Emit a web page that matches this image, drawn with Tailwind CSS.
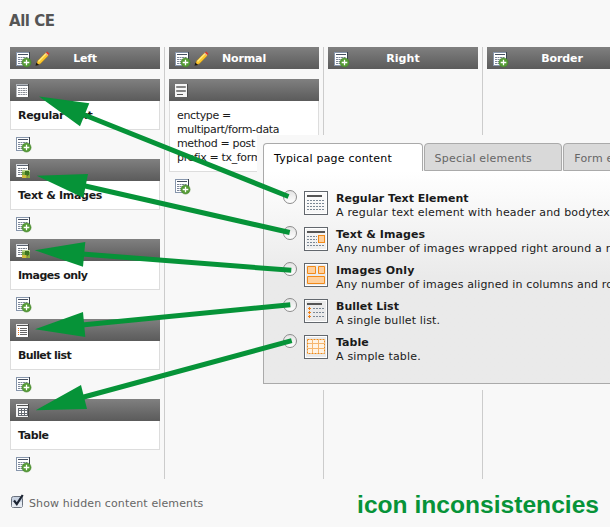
<!DOCTYPE html>
<html lang="en">
<head>
<meta charset="utf-8">
<title>All CE</title>
<script src="https://cdn.jsdelivr.net/npm/@tailwindcss/browser@4"></script>
</head>
<body class="relative w-[610px] h-[527px] overflow-hidden bg-[#f8f8f8] font-['DejaVu_Sans',Verdana,sans-serif] text-[11px] leading-[14px] text-[#1a1a1a]">
<svg class="hidden">
  <defs>
    <linearGradient id="paper" x1="0" y1="0" x2="1" y2="1"><stop offset="0" stop-color="#fff"/><stop offset="1" stop-color="#e9ebed"/></linearGradient>
    <symbol id="doc" viewBox="0 0 16 16">
      <rect x="0" y="0" width="13" height="13" fill="#b4b8bd"/><rect x="12" y="0" width="1" height="13" fill="#4a4a4a"/><rect x="1" y="1" width="11" height="12" fill="#fff"/>
      <path d="M1 1.500h11" stroke="#707680"/>
      <path d="M2 4.500h9M2 6.500h9M2 8.500h9M2 10.500h9" stroke="#8b8f96" stroke-dasharray="2 .5"/>
    </symbol>
    <symbol id="add" viewBox="0 0 16 16">
      <rect x="0" y="0" width="14" height="14" fill="#8796ac"/><rect x="13" y="0" width="1" height="7" fill="#39424e"/><rect x="1" y="1" width="12" height="12" fill="#fff"/>
      <path d="M2 2.500h10" stroke="#465061"/><path d="M2 5.500h10M2 7.500h10M2 9.500h7M2 11.500h5" stroke="#7c879a" stroke-dasharray="2 .5"/>
      <circle cx="10.500" cy="10.500" r="4.600" fill="#559b35" stroke="#427f2a" stroke-width=".5"/><path d="M10.500 7.700v5.600M7.700 10.500h5.600" stroke="#fff" stroke-width="1.300"/>
    </symbol>
    <symbol id="pencil" viewBox="0 0 16 16">
      <path d="M1.200 14.200l1.300-4.200L10.400 1.900l2.900 2.900-7.900 8z" fill="#fbc62b" stroke="#b47c12" stroke-width=".5"/>
      <path d="M3.500 10.500l7.300-7.500" stroke="#ffec80" stroke-width="1.300"/><path d="M10.900 1.500l1.200-1.100 2.400 2.400-1.200 1.200z" fill="#dd3322"/><path d="M10 2.300l.9-.8 2.400 2.500-.8.800z" fill="#eab9a0"/>
      <path d="M.5 14.800l.8-3.400 2.800 2.500z" fill="#171717"/>
    </symbol>
    <symbol id="image" viewBox="0 0 16 16">
      <rect width="13" height="13" fill="#d5d8dc"/><rect x="1" y="1" width="11" height="12" fill="#fff"/><rect x="12" y="0" width="1" height="6" fill="#4a4a4a"/>
      <path d="M1 1.500h11" stroke="#596170"/><path d="M2 4.500h9M2 6.500h4M2 8.500h4M2 10.500h4" stroke="#757d89" stroke-dasharray="2 .5"/>
      <rect x="6" y="6" width="8" height="8" fill="#78a943"/><path d="M6 6h8v2H6z" fill="#b9d58b"/><rect x="9" y="7" width="4" height="4" fill="#3d751f"/><rect x="6" y="11" width="4" height="3" fill="#d0bb3c"/><rect x="11" y="11" width="1" height="3" fill="#7b5927"/><path d="M10 12h4v2h-4z" fill="#99ae39" opacity=".7"/>
    </symbol>
    <symbol id="bullets" viewBox="0 0 16 16">
      <rect width="13" height="13" fill="#e9e9e9"/><rect x="12" width="1" height="13" fill="#4a4a4a"/><rect x="1" y="1" width="11" height="12" fill="#fff"/><path d="M1 1.500h11" stroke="#555"/>
      <path d="M4 4.500h7M4 6.500h7M4 8.500h7M4 10.500h7" stroke="#666"/><path d="M2 4.500h1M2 6.500h1M2 8.500h1M2 10.500h1" stroke="#e77721"/>
    </symbol>
    <symbol id="grid" viewBox="0 0 16 16">
      <rect width="13" height="13" fill="#f4f4f4"/><rect x="12" width="1" height="13" fill="#4a4a4a"/><path d="M1 1.500h11" stroke="#555"/><path d="M2 4h10v8H2z" fill="#666b72"/><path d="M3 5h2v1H3zM6 5h2v1H6zM9 5h2v1H9zM3 7h2v2H3zM6 7h2v2H6zM9 7h2v2H9zM3 10h2v1H3zM6 10h2v1H6zM9 10h2v1H9z" fill="#fff"/>
    </symbol>
    <symbol id="form" viewBox="0 0 16 16">
      <rect width="13" height="13" fill="#f6f6f6"/><rect x="12" width="1" height="13" fill="#4a4a4a"/><path d="M1.500 2.500h9v1h-9zM1.500 6.500h9v1h-9z" fill="#c4c4c4" stroke="#858585"/><path d="M2 10.500h6" stroke="#555"/>
    </symbol>
    <symbol id="frame" viewBox="0 0 24 24"><rect x=".5" y=".5" width="23" height="23" fill="url(#paper)" stroke="#62676d"/><rect x="1.500" y="1.500" width="21" height="21" fill="none" stroke="#fff"/></symbol>
  </defs>
</svg>

<h1 class="absolute left-[9px] top-[11px] text-[15px] leading-[20px] font-bold text-[#555] tracking-[-0.45px]">All CE</h1>

<main class="pt-[47px] pl-[10px] flex w-[610px] overflow-hidden gap-1">
  <section class="w-[155px] h-[432px] pr-1 border-r border-[#ccc] shrink-0">
    <header class="h-[22px] grid grid-cols-[1fr_auto_1fr] items-center bg-linear-to-b from-[#808080] to-[#5b5b5b] text-white font-bold">
      <span class="flex gap-[3px] pl-[6px] pt-[3px]"><svg class="w-4 h-4"><use href="#add"/></svg><svg class="w-4 h-4 -mt-[1px]"><use href="#pencil"/></svg></span><span class="pt-[2px] tracking-[-0.2px]">Left</span>
    </header>
    <div class="pt-[10px]">
      <article class="h-20"><div class="h-[22px] pl-[6px] pt-[5px] bg-linear-to-b from-[#808080] to-[#5b5b5b]"><svg class="w-4 h-4"><use href="#doc"/></svg></div><div class="h-[29px] bg-white border border-t-0 border-[#ddd] pl-[7px] pt-2 font-bold tracking-[-0.3px]">Regular Text</div><svg class="ml-[6px] mt-[7px] w-4 h-4"><use href="#add"/></svg></article>
      <article class="h-20"><div class="h-[22px] pl-[6px] pt-[5px] bg-linear-to-b from-[#808080] to-[#5b5b5b]"><svg class="w-4 h-4"><use href="#image"/></svg></div><div class="h-[29px] bg-white border border-t-0 border-[#ddd] pl-[7px] pt-2 font-bold tracking-[-0.3px]">Text &amp; Images</div><svg class="ml-[6px] mt-[7px] w-4 h-4"><use href="#add"/></svg></article>
      <article class="h-20"><div class="h-[22px] pl-[6px] pt-[5px] bg-linear-to-b from-[#808080] to-[#5b5b5b]"><svg class="w-4 h-4"><use href="#image"/></svg></div><div class="h-[29px] bg-white border border-t-0 border-[#ddd] pl-[7px] pt-2 font-bold tracking-[-0.5px]">Images only</div><svg class="ml-[6px] mt-[7px] w-4 h-4"><use href="#add"/></svg></article>
      <article class="h-20"><div class="h-[22px] pl-[6px] pt-[5px] bg-linear-to-b from-[#808080] to-[#5b5b5b]"><svg class="w-4 h-4"><use href="#bullets"/></svg></div><div class="h-[29px] bg-white border border-t-0 border-[#ddd] pl-[7px] pt-2 font-bold tracking-[-0.6px]">Bullet list</div><svg class="ml-[6px] mt-[7px] w-4 h-4"><use href="#add"/></svg></article>
      <article class="h-20"><div class="h-[22px] pl-[6px] pt-[5px] bg-linear-to-b from-[#808080] to-[#5b5b5b]"><svg class="w-4 h-4"><use href="#grid"/></svg></div><div class="h-[29px] bg-white border border-t-0 border-[#ddd] pl-[7px] pt-2 font-bold tracking-[-0.4px]">Table</div><svg class="ml-[6px] mt-[7px] w-4 h-4"><use href="#add"/></svg></article>
    </div>
  </section>
  <section class="w-[155px] h-[432px] pr-1 border-r border-[#ccc] shrink-0">
    <header class="h-[22px] grid grid-cols-[1fr_auto_1fr] items-center bg-linear-to-b from-[#808080] to-[#5b5b5b] text-white font-bold"><span class="flex gap-[3px] pl-[6px] pt-[3px]"><svg class="w-4 h-4"><use href="#add"/></svg><svg class="w-4 h-4 -mt-[1px]"><use href="#pencil"/></svg></span><span class="pt-[2px] tracking-[-0.1px]">Normal</span></header>
    <div class="mt-[10px] h-[22px] pl-[6px] pt-[5px] bg-linear-to-b from-[#808080] to-[#5b5b5b]"><svg class="w-4 h-4"><use href="#form"/></svg></div>
    <div class="h-[71px] bg-white border border-t-0 border-[#ddd] pl-[7px] pt-2 tracking-[-0.35px]">enctype =<br>multipart/form-data<br>method = post<br>prefix = tx_form</div>
    <svg class="ml-[6px] mt-[7px] w-4 h-4"><use href="#add"/></svg>
  </section>
  <section class="w-[155px] h-[432px] pr-1 border-r border-[#ccc] shrink-0">
    <header class="h-[22px] grid grid-cols-[1fr_auto_1fr] items-center bg-linear-to-b from-[#808080] to-[#5b5b5b] text-white font-bold"><span class="pl-[6px] pt-[3px]"><svg class="w-4 h-4"><use href="#add"/></svg></span><span class="pt-[2px] tracking-[0.1px]">Right</span></header>
  </section>
  <section class="w-[150px] shrink-0">
    <header class="h-[22px] grid grid-cols-[1fr_auto_1fr] items-center bg-linear-to-b from-[#808080] to-[#5b5b5b] text-white font-bold"><span class="pl-[6px] pt-[3px]"><svg class="w-4 h-4"><use href="#add"/></svg></span><span class="pt-[2px] tracking-[-0.1px]">Border</span></header>
  </section>
</main>

<footer class="flex justify-between pl-[10px] pr-[11px]">
  <label class="flex pt-[15px] gap-[2px] text-[#666]"><svg class="w-[17px] h-[17px]" viewBox="0 0 17 17"><rect x="1.500" y="2.500" width="11" height="11" rx="2" fill="#c9d3e2" stroke="#69717d"/><path d="M2 8h10v5H2z" fill="#e6ebf2"/><path d="M4 6.500l2.800 3.700L12.700 1" fill="none" stroke="#1c2433" stroke-width="2.200"/></svg><span class="pt-[3px] tracking-[0.12px]">Show hidden content elements</span></label>
  <strong class="pt-[11px] text-[24.6px] leading-[30px] text-[#069338] font-['Liberation_Sans',Arial,sans-serif] whitespace-nowrap">icon inconsistencies</strong>
</footer>

<aside class="absolute left-[257px] top-[135px] w-[353px] h-[255px] bg-[#f8f8f8] pl-[6px] pt-2 overflow-hidden">
  <nav class="relative flex gap-px w-[420px] h-7 text-[#666] tracking-[0.2px]">
    <div class="w-[160px] h-7 pl-[10px] pt-2 rounded-t-[4px] border border-b-0 border-[#aaa] bg-white text-black">Typical page content</div>
    <div class="w-[139px] h-7 pl-[10px] pt-2 rounded-t-[4px] border border-[#aaa] bg-[#d9d9d9]">Special elements</div>
    <div class="w-[120px] h-7 pl-[10px] pt-2 rounded-t-[4px] border border-[#aaa] bg-[#d9d9d9]">Form elements</div>
  </nav>
  <div class="w-[480px] h-[213px] border border-t-0 border-[#aaa] bg-linear-to-b from-white to-[#eaeaea] to-50% pl-[19px] pt-5 whitespace-nowrap">
    <div class="flex h-9"><i class="block w-[14px] h-[14px] mt-[-1px] rounded-full border border-[#8c8c8c] bg-linear-to-b from-[#e4e4e4] to-white"></i><svg class="w-6 h-6 ml-[7px]" viewBox="0 0 24 24"><use href="#frame"/><path d="M3 5h15" stroke="#555" stroke-width="2"/><path d="M3 9.500h18M3 12.500h18M3 15.500h18M3 18.500h18" stroke="#7b8896" stroke-dasharray="2 1"/></svg><div class="ml-2 pt-px"><b class="block">Regular Text Element</b><span class="block tracking-[0.18px]">A regular text element with header and bodytext fields</span></div></div>
    <div class="flex h-9"><i class="block w-[14px] h-[14px] mt-[-1px] rounded-full border border-[#8c8c8c] bg-linear-to-b from-[#e4e4e4] to-white"></i><svg class="w-6 h-6 ml-[7px]" viewBox="0 0 24 24"><use href="#frame"/><path d="M3 5h18" stroke="#555" stroke-width="2"/><path d="M3 9.500h10M3 12.500h10M3 15.500h10M3 18.500h18" stroke="#7b8896" stroke-dasharray="2 1"/><rect x="14.500" y="8.500" width="6" height="7" fill="#ffd09c" stroke="#f28a19"/></svg><div class="ml-2 pt-px"><b class="block tracking-[0.1px]">Text &amp; Images</b><span class="block tracking-[0.18px]">Any number of images wrapped right around a regular text</span></div></div>
    <div class="flex h-9"><i class="block w-[14px] h-[14px] mt-[-1px] rounded-full border border-[#8c8c8c] bg-linear-to-b from-[#e4e4e4] to-white"></i><svg class="w-6 h-6 ml-[7px]" viewBox="0 0 24 24"><use href="#frame"/><g fill="#ffd09c" stroke="#f28a19"><path d="M3.500 3.500h8v7h-8zM14.500 3.500h6v7h-6zM3.500 13.500h17v7h-17z"/></g></svg><div class="ml-2 pt-px"><b class="block tracking-[0.15px]">Images Only</b><span class="block tracking-[0.13px]">Any number of images aligned in columns and rows</span></div></div>
    <div class="flex h-9"><i class="block w-[14px] h-[14px] mt-[-1px] rounded-full border border-[#8c8c8c] bg-linear-to-b from-[#e4e4e4] to-white"></i><svg class="w-6 h-6 ml-[7px]" viewBox="0 0 24 24"><use href="#frame"/><path d="M3 5h15" stroke="#555" stroke-width="2"/><path d="M9 9.500h12M9 13.500h12M9 17.500h12" stroke="#7b8896" stroke-dasharray="2 1"/><path d="M4 9.500h3M5.500 8v3M4 13.500h3M5.500 12v3M4 17.500h3M5.500 16v3" stroke="#ef8017"/></svg><div class="ml-2 pt-px"><b class="block">Bullet List</b><span class="block tracking-[0.13px]">A single bullet list.</span></div></div>
    <div class="flex h-9"><i class="block w-[14px] h-[14px] mt-[-1px] rounded-full border border-[#8c8c8c] bg-linear-to-b from-[#e4e4e4] to-white"></i><svg class="w-6 h-6 ml-[7px]" viewBox="0 0 24 24"><use href="#frame"/><path d="M3.500 4.500h17v14h-17z" fill="#fff3e3" stroke="#ef8a18" stroke-dasharray="2 1"/><path d="M8.500 5v13M14.500 5v13M4 8.500h16M4 13.500h16" stroke="#f6b66d"/></svg><div class="ml-2 pt-px"><b class="block">Table</b><span class="block tracking-[0.18px]">A simple table.</span></div></div>
  </div>
</aside>

<svg class="absolute inset-0 w-[610px] h-[527px] pointer-events-none" viewBox="0 0 610 527" fill="#069338" stroke="none">
  <path d="M39 96.500L89.300 103.300 80 126.300zM36.700 175.700L88 174 83.300 197.700zM34.700 250.300L85.300 242 83 266.700zM35 329.300L83 312 85.300 337zM35.700 410.300L81 385 87 409z"/>
  <path d="M82 114L288.500 196.500M83 185.500L289.700 232.500M82 254L291.300 270.300M82 325L290.300 304.700M82 397.500L291.700 340.700" fill="none" stroke="#069338" stroke-width="5"/>
</svg>
</body>
</html>
